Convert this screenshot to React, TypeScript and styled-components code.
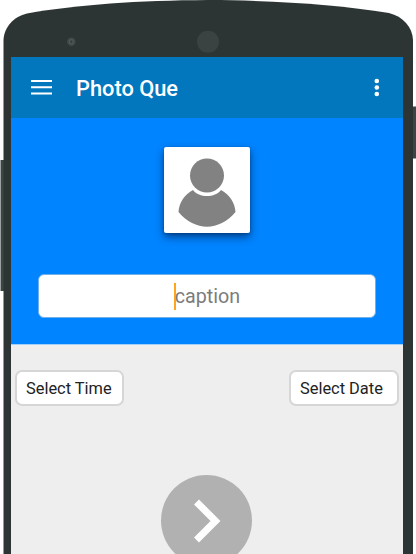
import React from "react";
import styled, { createGlobalStyle } from "styled-components";

const GlobalStyle = createGlobalStyle`
  * { box-sizing: border-box; }
  body {
    margin: 0;
    background: #fff;
    font-family: Roboto, "Liberation Sans", sans-serif;
    overflow: hidden;
  }
`;

const Device = styled.div`
  position: relative;
  width: 416px;
  height: 554px;
  padding: 57px 13px 0 11px;
  overflow: hidden;
`;

const DeviceShell = styled.svg`
  position: absolute;
  inset: 0;
  z-index: 0;
`;

const Screen = styled.main`
  position: relative;
  z-index: 1;
  display: flex;
  flex-direction: column;
  height: 497px;
  overflow: hidden;
  background: #eeeeee;
`;

const AppBar = styled.header`
  flex: none;
  display: flex;
  align-items: center;
  height: 61px;
  padding: 0 22px 0 20px;
  background: #0277bd;
`;

const BarButton = styled.button<{ $width: number }>`
  display: block;
  width: ${(p) => p.$width}px;
  height: 24px;
  padding: 0;
  border: 0;
  background: none;
  svg { display: block; }
`;

const Title = styled.h1`
  flex: 1;
  margin: 2px 0 0 24px;
  color: #fff;
  font-size: 21.8px;
  font-weight: 500;
  line-height: 28px;
`;

const PhotoPanel = styled.section`
  flex: none;
  display: flex;
  flex-direction: column;
  align-items: center;
  height: 227px;
  padding: 29px 27px 0;
  background: #0084ff;
  border-bottom: 1px solid #a3cef7;
`;

const PhotoCard = styled.div`
  width: 86px;
  height: 86px;
  margin-right: 1px;
  border-radius: 2px;
  background: #fff;
  box-shadow: 0 4px 9px rgba(0, 25, 65, 0.6), 0 1px 3px rgba(0, 25, 65, 0.3);
  svg { display: block; }
`;

const CaptionField = styled.div`
  display: flex;
  align-items: center;
  justify-content: center;
  width: 338px;
  height: 44px;
  margin-top: 41px;
  border: 1px solid #70afea;
  border-radius: 6px;
  background: #fff;
`;

const Caret = styled.span`
  width: 2px;
  height: 27px;
  margin-right: -1px;
  background: #ffa51c;
`;

const Placeholder = styled.span`
  padding-top: 2px;
  color: #7c7c7c;
  font-size: 19.7px;
  line-height: 26px;
`;

const Actions = styled.div`
  flex: none;
  display: flex;
  justify-content: space-between;
  padding: 25px 4px 0;
`;

const PickerButton = styled.button<{ $width: number }>`
  width: ${(p) => p.$width}px;
  height: 36px;
  padding: 2px 0 0 9px;
  border: 2px solid #d6d6d6;
  border-radius: 7px;
  background: #fff;
  color: #222;
  font-family: inherit;
  font-size: 16.4px;
  line-height: 30px;
  text-align: left;
  white-space: nowrap;
`;

const NextButton = styled.button`
  flex: none;
  align-self: center;
  width: 91px;
  height: 91px;
  margin: 69px 1px 0 0;
  padding: 0;
  border: 0;
  border-radius: 50%;
  background: #b1b1b1;
  svg { display: block; }
`;

export default function App() {
  return (
    <>
      <GlobalStyle />
      <Device>
        <DeviceShell width="416" height="554" viewBox="0 0 416 554" aria-hidden="true">
          <path d="M0.5 160H5V291H0.5Z" fill="#3b4644" />
          <path d="M412 106.5H416V158.5H412Z" fill="#3b4644" />
          <path
            d="M3.5 554V40C4 27 14 16.500 27 13.500C78 4.500 138 0.500 208 0C278 0.500 338 4.500 389 13C403 16.500 412.500 27 413 40V554Z"
            fill="#2d3534"
          />
          <circle cx="71.300" cy="41.700" r="4.200" fill="#414a49" />
          <circle cx="71.300" cy="41.700" r="2" fill="#36403e" stroke="#56605e" />
          <circle cx="208" cy="41.800" r="11" fill="#3a4341" />
        </DeviceShell>
        <Screen>
          <AppBar>
            <BarButton $width={21} aria-label="Menu">
              <svg width="21" height="24" viewBox="0 0 21 24">
                <path d="M0 5H21M0 11.200H21M0 17.500H21" stroke="#fff" strokeWidth="2" />
              </svg>
            </BarButton>
            <Title>Photo Que</Title>
            <BarButton $width={8} aria-label="More options">
              <svg width="8" height="24" viewBox="0 0 8 24" fill="#fff">
                <circle cx="3.800" cy="5" r="2.300" />
                <circle cx="3.800" cy="11.500" r="2.300" />
                <circle cx="3.800" cy="18" r="2.300" />
              </svg>
            </BarButton>
          </AppBar>
          <PhotoPanel>
            <PhotoCard>
              <svg width="86" height="86" viewBox="0 0 86 86" fill="#828282">
                <circle cx="43" cy="28.500" r="17" />
                <path d="M29 43C35 51 51 51 57 43C66 48 71 56 71.500 65C55 84.500 31 84.500 14.500 65C15 56 20 48 29 43Z" />
              </svg>
            </PhotoCard>
            <CaptionField>
              <Caret />
              <Placeholder>caption</Placeholder>
            </CaptionField>
          </PhotoPanel>
          <Actions>
            <PickerButton $width={109}>Select Time</PickerButton>
            <PickerButton $width={110}>Select Date</PickerButton>
          </Actions>
          <NextButton aria-label="Next">
            <svg width="91" height="91" viewBox="0 0 91 91">
              <path d="M35.500 27L54.500 46L35.500 65" fill="none" stroke="#fff" strokeWidth="7" />
            </svg>
          </NextButton>
        </Screen>
      </Device>
    </>
  );
}
